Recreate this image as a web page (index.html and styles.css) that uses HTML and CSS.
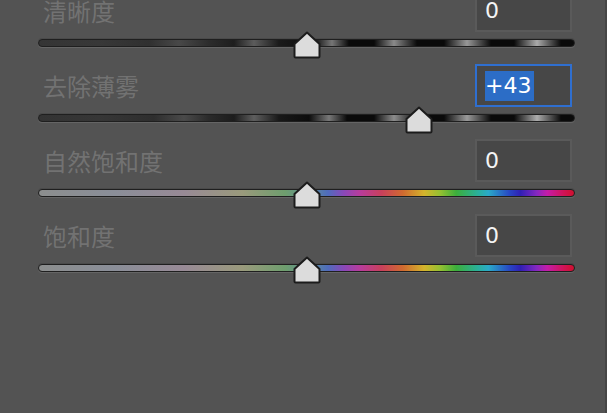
FILE: index.html
```html
<!DOCTYPE html>
<html lang="zh-CN">
<head>
    <meta charset="UTF-8">
    <title>基本调整</title>
    <link rel="stylesheet" href="styles.css">
</head>
<body>
    <div class="pane">
        <div class="panel">
            <div class="control">
                <div class="control-head">
                    <span class="label">清晰度</span>
                    <div class="value">0</div>
                </div>
                <div class="slider">
                    <div class="track track-clarity"></div>
                    <svg class="thumb" style="left: 50%;" viewBox="0 0 28 28"><path d="M14 1.5 L26.5 13 V25.5 Q26.5 26.5 25.5 26.5 H2.5 Q1.5 26.5 1.5 25.5 V13 Z"/></svg>
                </div>
            </div>
            <div class="control">
                <div class="control-head">
                    <span class="label">去除薄雾</span>
                    <div class="value value-active"><span class="selected">+43</span></div>
                </div>
                <div class="slider">
                    <div class="track track-dehaze"></div>
                    <svg class="thumb" style="left: 71%;" viewBox="0 0 28 28"><path d="M14 1.5 L26.5 13 V25.5 Q26.5 26.5 25.5 26.5 H2.5 Q1.5 26.5 1.5 25.5 V13 Z"/></svg>
                </div>
            </div>
            <div class="control">
                <div class="control-head">
                    <span class="label">自然饱和度</span>
                    <div class="value">0</div>
                </div>
                <div class="slider">
                    <div class="track track-color"></div>
                    <svg class="thumb" style="left: 50%;" viewBox="0 0 28 28"><path d="M14 1.5 L26.5 13 V25.5 Q26.5 26.5 25.5 26.5 H2.5 Q1.5 26.5 1.5 25.5 V13 Z"/></svg>
                </div>
            </div>
            <div class="control">
                <div class="control-head">
                    <span class="label">饱和度</span>
                    <div class="value">0</div>
                </div>
                <div class="slider">
                    <div class="track track-color"></div>
                    <svg class="thumb" style="left: 50%;" viewBox="0 0 28 28"><path d="M14 1.5 L26.5 13 V25.5 Q26.5 26.5 25.5 26.5 H2.5 Q1.5 26.5 1.5 25.5 V13 Z"/></svg>
                </div>
            </div>
        </div>
    </div>
</body>
</html>
```

FILE: styles.css
```css
html, body { margin: 0; height: 100%; overflow: hidden; }
body { background-color: #535353; font-family: "DejaVu Sans", "Noto Sans CJK SC", sans-serif; }

.pane { height: 100%; box-sizing: border-box; border-right: 2px solid #464646; overflow: hidden; }
.panel { margin: -11px 30px 0 38px; }

.control { margin-bottom: 17px; }
.control-head { display: flex; align-items: center; justify-content: space-between; padding: 0 3px 0 5px; }
.label { font-family: "Noto Sans CJK SC", sans-serif; font-size: 24px; color: #727272; }

.value { width: 93px; height: 39px; border: 2px solid #5a5a5a; background-color: #474747; color: #f4f4f4; font-size: 22px; display: flex; align-items: center; }
.value::before { content: ""; width: 8px; }
.value-active { border-color: #2f6fd0; }
.selected { background-color: #2c6dc6; color: #ffffff; line-height: 30px; padding-right: 3px; }

.slider { position: relative; height: 8px; margin-top: 7px; }
.track { height: 8px; box-sizing: border-box; border: 1px solid #1f1f1f; border-radius: 4px; box-shadow: 0 1px 0 #656565, 0 -1px 0 #4a4a4a; }

.track-clarity {
    background: linear-gradient(to right,
        #353535 0px, #383838 60px, #303030 110px, #484848 140px, #2c2c2c 170px,
        #1e1e1e 195px, #5c5c5c 215px, #1a1a1a 240px, #0c0c0c 275px,
        #767676 293px, #0a0a0a 310px, #0a0a0a 335px, #8a8a8a 355px, #0a0a0a 378px,
        #0a0a0a 405px, #989898 428px, #0a0a0a 452px, #0a0a0a 475px, #aaaaaa 498px,
        #0a0a0a 522px, #0a0a0a 537px);
}
.track-dehaze {
    background: linear-gradient(to right,
        #333333 0px, #363636 60px, #2e2e2e 115px, #4a4a4a 145px, #2a2a2a 170px,
        #1c1c1c 195px, #5e5e5e 215px, #181818 240px, #0c0c0c 270px,
        #787878 290px, #0a0a0a 308px, #0a0a0a 335px, #8c8c8c 355px, #0a0a0a 378px,
        #0a0a0a 405px, #9a9a9a 428px, #0a0a0a 452px, #0a0a0a 475px, #acacac 498px,
        #0a0a0a 522px, #0a0a0a 537px);
}
.track-color {
    background: linear-gradient(to right,
        #8c8e8e 0%, #8a8e98 14%, #988a96 27%, #9a9a7c 38%, #6e9e6e 46%,
        #5c8c9a 51%, #4f6cbc 54%, #8a48b8 57%, #b83c9c 60%, #c8405c 64%,
        #d06a30 68%, #d4b42c 72%, #94c032 75%, #3cae3c 78%, #2ab09a 82%,
        #2aaac8 84%, #2846c4 88%, #3020b4 90%, #8428c0 93%, #c41ca8 95%,
        #d01458 98%, #d0102e 100%);
}

.thumb { position: absolute; top: -8px; width: 28px; height: 28px; margin-left: -14px; }
.thumb path { fill: #dcdcdc; stroke: #1c1c1c; stroke-width: 2; stroke-linejoin: round; }
```
